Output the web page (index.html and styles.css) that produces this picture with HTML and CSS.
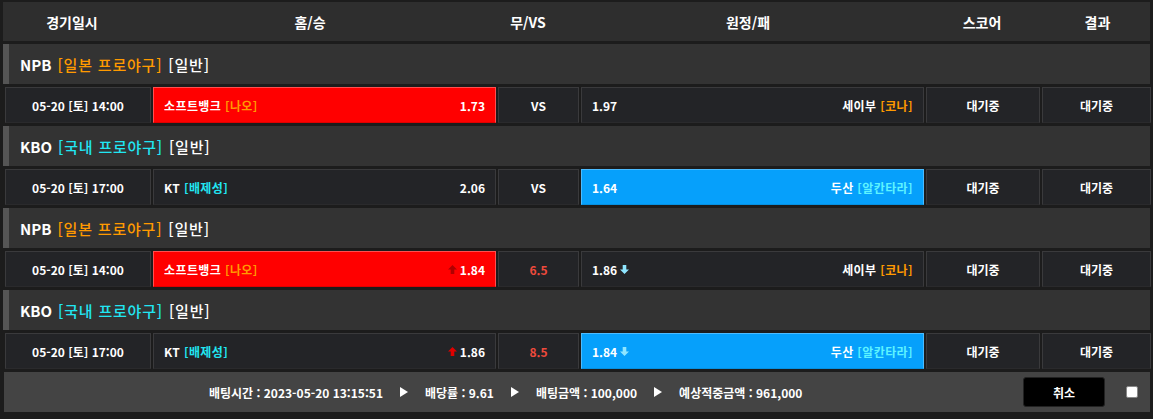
FILE: index.html
```html
<!DOCTYPE html>
<html lang="ko">
<head>
<meta charset="utf-8">
<link rel="stylesheet" href="styles.css">
</head>
<body>
<div class="board">
  <div class="thead">
    <div>경기일시</div><div>홈/승</div><div>무/VS</div><div>원정/패</div><div>스코어</div><div>결과</div>
  </div>

  <div class="group"><b>NPB</b> <span class="org">[일본 프로야구]</span> <span>[일반]</span></div>
  <div class="row">
    <div class="cell date">05-20 [토] 14:00</div>
    <div class="cell team home red"><span class="kr">소프트뱅크 <span class="org">[나오]</span></span><span>1.73</span></div>
    <div class="cell vs">VS</div>
    <div class="cell team away"><span>1.97</span><span class="kr">세이부 <span class="org">[코나]</span></span></div>
    <div class="cell">대기중</div>
    <div class="cell">대기중</div>
  </div>

  <div class="group"><b>KBO</b> <span class="cyan">[국내 프로야구]</span> <span>[일반]</span></div>
  <div class="row">
    <div class="cell date">05-20 [토] 17:00</div>
    <div class="cell team home"><span class="kr">KT <span class="cyan">[배제성]</span></span><span>2.06</span></div>
    <div class="cell vs">VS</div>
    <div class="cell team away blue"><span>1.64</span><span class="kr">두산 <span class="lcyan">[알칸타라]</span></span></div>
    <div class="cell">대기중</div>
    <div class="cell">대기중</div>
  </div>

  <div class="group"><b>NPB</b> <span class="org">[일본 프로야구]</span> <span>[일반]</span></div>
  <div class="row">
    <div class="cell date">05-20 [토] 14:00</div>
    <div class="cell team home red"><span class="kr">소프트뱅크 <span class="org">[나오]</span></span><span class="odd"><svg class="arr up-dark" viewBox="0 0 10 10"><path d="M5 0L10 5H7V10H3V5H0Z"/></svg>1.84</span></div>
    <div class="cell vs redtxt">6.5</div>
    <div class="cell team away"><span class="odd">1.86<svg class="arr down" viewBox="0 0 10 10"><path d="M5 10L10 5H7V0H3V5H0Z"/></svg></span><span class="kr">세이부 <span class="org">[코나]</span></span></div>
    <div class="cell">대기중</div>
    <div class="cell">대기중</div>
  </div>

  <div class="group"><b>KBO</b> <span class="cyan">[국내 프로야구]</span> <span>[일반]</span></div>
  <div class="row">
    <div class="cell date">05-20 [토] 17:00</div>
    <div class="cell team home"><span class="kr">KT <span class="cyan">[배제성]</span></span><span class="odd"><svg class="arr up" viewBox="0 0 10 10"><path d="M5 0L10 5H7V10H3V5H0Z"/></svg>1.86</span></div>
    <div class="cell vs redtxt">8.5</div>
    <div class="cell team away blue"><span class="odd">1.84<svg class="arr down" viewBox="0 0 10 10"><path d="M5 10L10 5H7V0H3V5H0Z"/></svg></span><span class="kr">두산 <span class="lcyan">[알칸타라]</span></span></div>
    <div class="cell">대기중</div>
    <div class="cell">대기중</div>
  </div>

  <div class="footer">
    <div class="info">
      <span>배팅시간 : 2023-05-20 13:15:51</span>
      <svg class="tri" viewBox="0 0 8 10"><path d="M0 0L8 5L0 10Z"/></svg>
      <span>배당률 : 9.61</span>
      <svg class="tri" viewBox="0 0 8 10"><path d="M0 0L8 5L0 10Z"/></svg>
      <span>배팅금액 : 100,000</span>
      <svg class="tri" viewBox="0 0 8 10"><path d="M0 0L8 5L0 10Z"/></svg>
      <span>예상적중금액 : 961,000</span>
    </div>
    <button class="cancel">취소</button>
    <span class="check"></span>
  </div>
</div>
</body>
</html>
```

FILE: styles.css
```css
* { box-sizing: border-box; }
html, body { margin: 0; padding: 0; }
body {
  background: #1c1c1c;
  font-family: "Noto Sans CJK KR", "Noto Sans", sans-serif;
  color: #fff;
  width: 1153px;
  height: 419px;
  overflow: hidden;
}
.board {
  padding: 2px 3px 0 3px;
}
.thead {
  height: 39px;
  background: #2e2e2e;
  display: grid;
  grid-template-columns: 138px 338px 98px 342px 126px 105px;
  align-items: center;
  font-size: 14px;
  font-weight: 700;
  text-align: center;
}
.group {
  margin-top: 3px;
  height: 40px;
  background: #333333;
  border-left: 6px solid #555555;
  padding-left: 11px;
  display: flex;
  align-items: center;
  gap: 6px;
  font-size: 15px;
  font-weight: 500;
  white-space: nowrap;
}
.group b { font-weight: 700; }
.group span { letter-spacing: 0.8px; }
.org { color: #ff9a00; }
.cyan { color: #21e6f2; }
.lcyan { color: #5ef3ff; }
.row {
  margin-top: 3px;
  height: 36px;
  padding-left: 2px;
  display: grid;
  grid-template-columns: 146px 343px 81px 343px 114px 109px;
  column-gap: 2px;
}
.cell {
  background: #232427;
  border: 1px solid #3a3a3c;
  border-bottom-color: #2a2a2c;
  display: flex;
  align-items: center;
  justify-content: center;
  font-size: 12px;
  font-weight: 700;
  white-space: pre;
}
.team {
  justify-content: space-between;
  padding: 0 10px;
}
.kr { letter-spacing: 0.4px; }
.red {
  background: #ff0000;
  border-color: #ff5050;
  border-bottom-color: #e00000;
}
.blue {
  background: #06a0fb;
  border-color: #4cbcff;
  border-bottom-color: #0690e0;
}
.redtxt { color: #ee4a3c; }
.odd {
  display: flex;
  align-items: center;
  gap: 3px;
}
.arr { width: 9px; height: 9px; }
.up-dark { fill: #b00000; }
.up { fill: #e00000; }
.down { fill: #8fe6ff; }
.footer {
  margin-top: 3px;
  margin-left: 1px;
  height: 40px;
  background: #444444;
  display: flex;
  align-items: center;
  font-size: 12px;
  font-weight: 700;
}
.info {
  display: flex;
  align-items: center;
  gap: 10px;
  margin-left: 205px;
  white-space: pre;
}
.info .tri {
  width: 8px;
  height: 10px;
  fill: #fff;
  margin: 0 7px;
}
.cancel {
  margin-left: auto;
  width: 82px;
  height: 30px;
  background: #000;
  border: 1px solid #222;
  border-radius: 3px;
  color: #fff;
  font-family: inherit;
  font-size: 12px;
  font-weight: 700;
}
.check {
  width: 12px;
  height: 12px;
  background: #fff;
  border: 1px solid #888;
  border-radius: 2px;
  margin: 0 12px 0 21px;
}
```
